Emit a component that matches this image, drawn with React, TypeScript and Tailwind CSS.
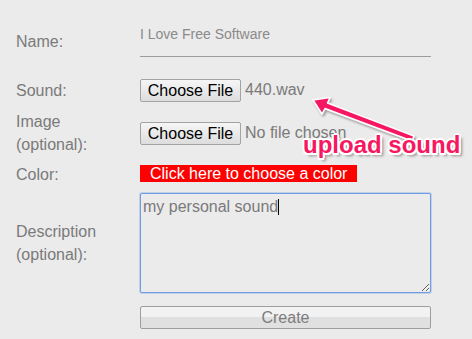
import React from 'react';

// --- Form row: label column + control column ---
interface RowProps {
    label: React.ReactNode;
    className?: string;
    children: React.ReactNode;
}

const Row = ({ label, className = '', children }: RowProps) => (
    <div className={`flex items-center ${className}`}>
        <div className="w-[124px] shrink-0 text-[16px] leading-[23px] text-[#7a7a7a]">{label}</div>
        <div className="w-[291px]">{children}</div>
    </div>
);

const FileButton = () => (
    <button
        type="button"
        className="h-[23px] w-[101px] rounded-[2px] border border-[#a3a3a3] bg-gradient-to-b from-[#f6f6f6] to-[#dddddd] text-[16px] leading-[21px] text-black"
    >
        Choose File
    </button>
);

const App = () => {
    return (
        <div className="relative h-[339px] w-[472px] overflow-hidden bg-[#ebebeb] pl-4 pt-[25px] font-['Liberation_Sans',Arial,sans-serif]">
            {/* Name */}
            <Row label="Name:">
                <div className="border-b border-[#9c9c9c] pb-[13px] text-[14px] leading-[18px] text-[#8a8a8a]">I Love Free Software</div>
            </Row>

            {/* Sound */}
            <Row label="Sound:" className="mt-[21px]">
                <div className="flex items-center gap-1">
                    <FileButton />
                    <span className="text-[16px] text-[#7a7a7a]">440.wav</span>
                </div>
            </Row>

            {/* Image */}
            <Row label={<>Image<br />(optional):</>} className="mt-[8px]">
                <div className="flex items-center gap-1">
                    <FileButton />
                    <span className="text-[16px] text-[#7a7a7a]">No file chosen</span>
                </div>
            </Row>

            {/* Color */}
            <Row label="Color:" className="mt-[6px]">
                <div className="inline-block h-[17px] w-[217px] bg-[#ff0000] pl-[10px] text-[16px] leading-[17px] text-white">
                    Click here to choose a color
                </div>
            </Row>

            {/* Description */}
            <Row label={<>Description<br />(optional):</>} className="mt-[7px]">
                <div className="relative">
                    <textarea
                        defaultValue="my personal sound"
                        className="block h-[100px] w-[291px] rounded-[2px] border border-[#6f9de3] bg-[#ebebeb] px-[2px] py-[3px] text-[16px] leading-[19px] text-[#7a7a7a] shadow-[0_0_0_1px_rgba(120,160,225,0.35)] outline-none"
                    />
                    <span className="absolute left-[138px] top-[6px] h-[16px] w-px bg-black" />
                </div>
            </Row>

            {/* Submit */}
            <Row label="" className="mt-[13px]">
                <button
                    type="button"
                    className="h-[23px] w-[291px] rounded-[2px] border border-[#9e9e9e] bg-[linear-gradient(#f2f2f2_0%,#f2f2f2_45%,#e0e0e0_50%,#e0e0e0_100%)] text-[16px] leading-[21px] text-[#7d7d7d]"
                >
                    Create
                </button>
            </Row>

            {/* Annotation arrow */}
            <svg className="pointer-events-none absolute left-0 top-0" width="472" height="339">
                <defs>
                    <filter id="arrowShadow" x="-20%" y="-20%" width="140%" height="140%">
                        <feDropShadow dx="1.5" dy="2" stdDeviation="1.2" floodColor="#000" floodOpacity="0.35" />
                    </filter>
                </defs>
                <g filter="url(#arrowShadow)">
                    <polygon
                        points="313,100 330,97.5 327.5,103 414,136 412,141 325,108.5 322,114"
                        fill="#f71862"
                        stroke="#ffffff"
                        strokeWidth="1.5"
                        strokeLinejoin="round"
                    />
                </g>
            </svg>

            {/* Annotation label */}
            <div className="pointer-events-none absolute left-[303px] top-[131px] text-[24px] font-bold leading-[28px] text-[#f71862] [text-shadow:-2px_0_0_#fff,2px_0_0_#fff,0_-2px_0_#fff,0_2px_0_#fff,-1.5px_-1.5px_0_#fff,1.5px_-1.5px_0_#fff,-1.5px_1.5px_0_#fff,1.5px_1.5px_0_#fff,3px_3px_3px_rgba(0,0,0,0.45)]">
                upload sound
            </div>
        </div>
    );
};

export default App;
